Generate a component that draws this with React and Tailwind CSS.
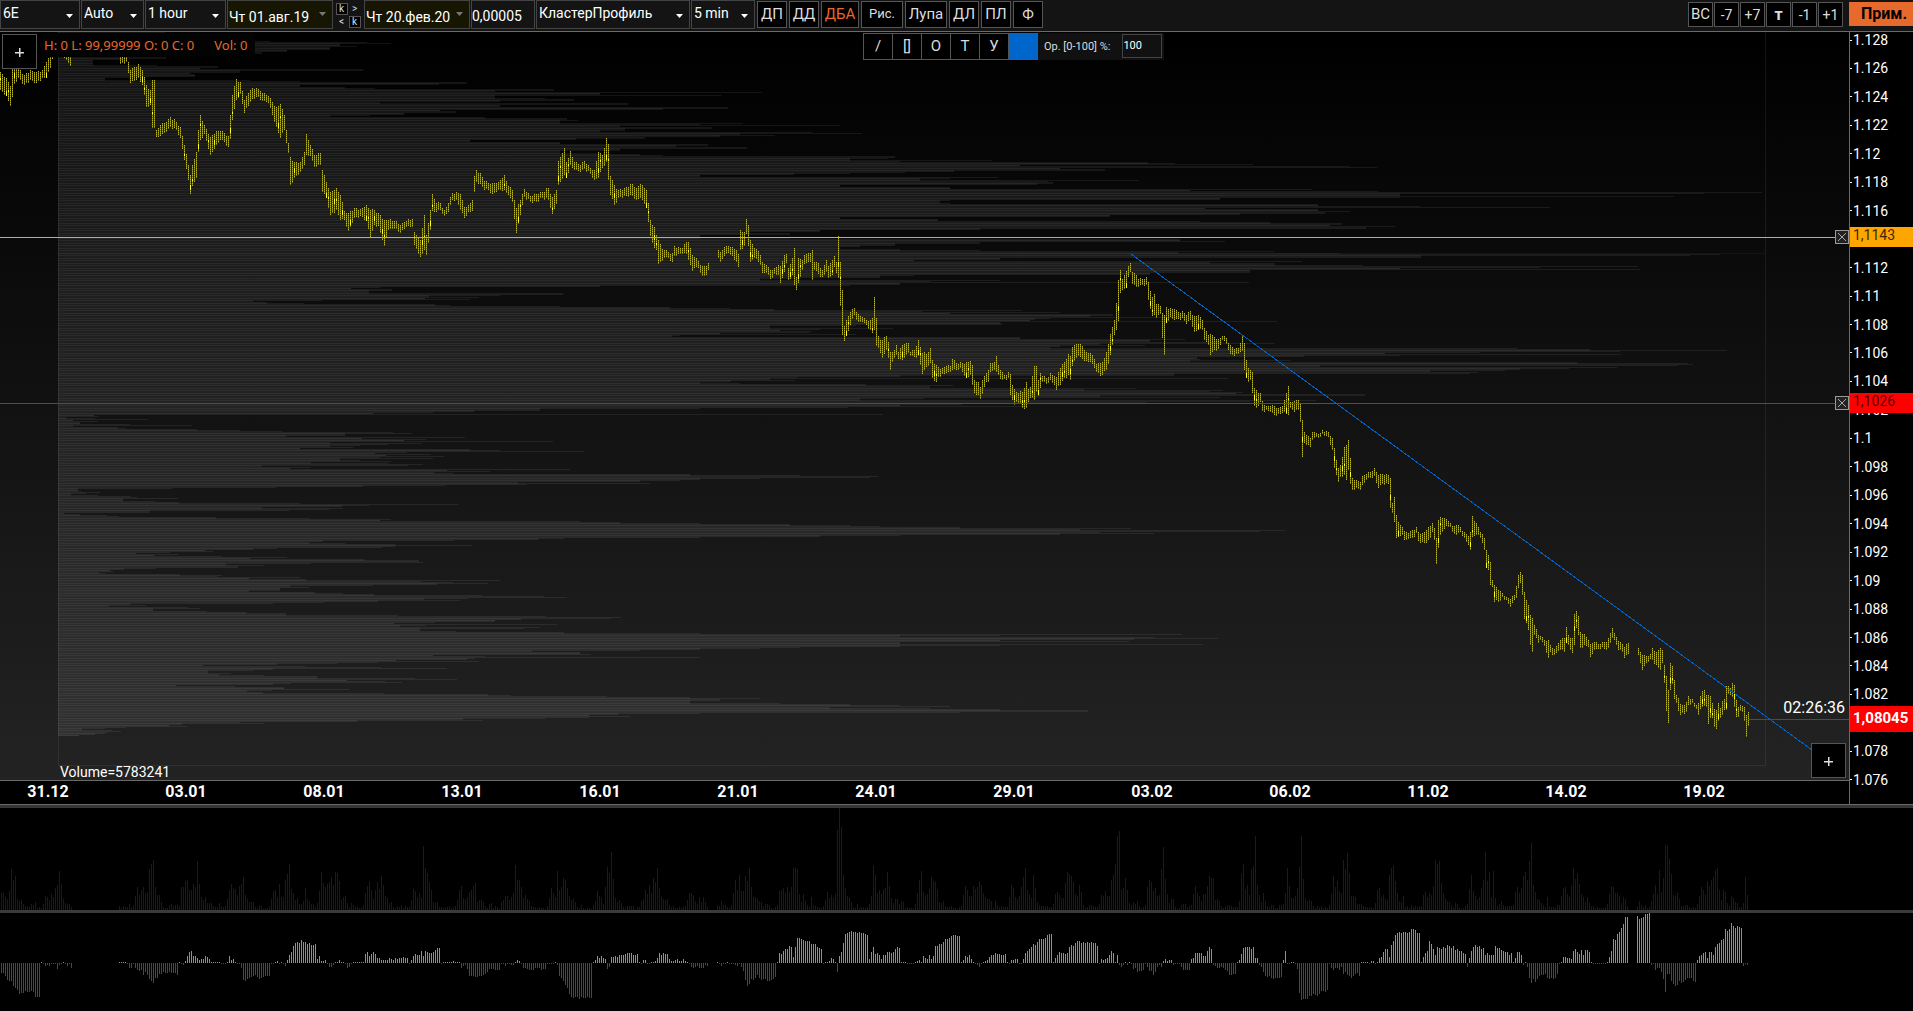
import { useState } from "react";

// one bar every 2px; each run is [first bar, values]
const VOLUME = [
  [0, "17 17 13 11 19 41 30 34 11 9 10 6 4 3 3 6 5 8 2 3 2 6 14 13 10 16 13 22 25 39 26 11 7 6 6 3"],
  [59, "4 2 4 3 3 6 3 5 14 23 15 20 23 17 18 41 46 50 23 15 15 8 3 2 2 5 6 4 5 5 4 23 23 29 30 20 20 26 23 49 26 13 10 13 7 7 7 4 3 3 7 4 3 4 11 20 26 22 21 15 24 26 33 15 11 8 8 8 3 2 5 4 1 2 2 4 11 19 20 13 26 13 13 30 36 46 21 17 10 12 6 6 9 22 11 9 6 5 3 7"],
  [159, "19 38 27 23 26 28 33 25 38 37 29 11 13 14 7 3 7 5 3 3 2 3 5 17 24 28 20 11 20 28 21 34 25 14 12 7 8 3 2 4 3 5 2 4 3 3 10 21 19 13 17 12 64 42 37 28 20 8 7 8 3 3 2 3 3 4 2 3 4 10 20 24 12 11 13 18 20 24 27 8 10 10 8 4 2 6 7 2 4 3 1 8 10 14 14 10 13 17 45 30 30 23 12 15 11 9 4 3 3 2 3 2 2 1 4 12 22 17 13"],
  [278, "39 20 23 32 30 22 14 10 12 8 3 2 5 2 1 2 2 1 5 9 19 14 12 6 23 43 37 58 31 12 8 10 7 3 2 4 4 4 4 1 3 3"],
  [320, "9 11 20 16 25 17 32 28 42 22 13 11 10 11 5 3 4 2 2 3 2 3 4 10 17 17 15 9 6 13 8 13 8 3"],
  [358, "5 4 9 5 5 3 2 5 17 30 20 35 19 19 34 29 42 23 13 13 11 9 8 4 6 6 5 2 1 3 5 19 20 22 17 23 18 23 42 42 41 16 8 16 9 5 3 13 5 4 3 3 2 4 10 18 12 15 12 16 80"],
  [419, "102 83 35 22 14 13 8 3 2 6 2 3 3 2 3 6 14 44 35 17 20 16 21 22 38 24 12 7 11 11 6 9 8 2 3 2 2 2 6 17 30 39 18 15 16 21 33 29 28 20 8 7 9 4 3 3 4 2 2 1 3 4 15 24 20 14 14 24 21 23 29 25 17 13 11 11 9 2 9 5 3 4 3 3 3"],
  [504, "13 25 22 13 11 14 23 33 42 20 16 12 35 22 8 5 4 4 3 4 3 3 6 16 18 15 12 12 27 38 36 34 28 16 14 25 18 5 2 3 5 5 4 3 3 6 15 14 19 14 14 30 35 46 74 79 21 22 32 20 7 5 8 6 9 4 2 3 5"],
  [573, "23 30 28 19 22 14 15 41 63 31 16 7 11 11 3 1 2 5 6 6 3 4 5 16 24 17 14 9 16 16 24 34 32 32 10 11 9 4 2 3 5 5 4 3 3 3 9"],
  [620, "36 46 21 25 15 41 44 74 25 15 8 17 9 4 3 5 5 2 2 5 5 6 17 42 24 12 12 14 22 43 74 31 12 9 10 9 4 2 4 3 4 2 3 2 5 16 34 23 29 19 17 50 41 57 37 14 14 13 6 6 6 4 3 3 3 3 2 7 20 22 13 15 11 10 35 42 44 29 17 9 8 14 3 4 2 5 3 4 3 3 4"],
  [711, "15 18 13 17 15 24 50 46 49 27 17 12 9 8 5 3 7 6 3 1 2 4 6 21 35 19 14 11 13 22 30 58 29 38 13 39 12 4 6 9 5 3 4 4 4 5 18 23 17 22 34 38 30 49 67 25 18 11 10 7 5 3 13 4 3 3 2 5 5 14 22 23 16 13 24 42 31 36 26 16 13 8 13 7 4 4 2 3 2 2 2 3 6 16 24 23 17 17 14 7 13 11 4"],
  [818, "3 9 5 3 5 2 3 9 16 25 16 40 18 32 65 64 51 36 15 14 17 11 4 4 5 5 3 2 3 2 6 14 23 20 16 29 24 30 33 40 42 20 10 20 18 7 4 14 12 8 7 3 3 7 33 15"],
];

const DELTA = [
  [0, "-10 -10 -13 -17 -18 -18 -23 -25 -27 -31 -30 -30 -28 -29 -29 -28 -29 -34 -34 -34 1 -1 -3 -2 -3 -1 -1 -1 -6 -2 -1 1 -1 -3 -1 -5"],
  [59, "1 1 1 1 -1 -5 -5 -1 -5 -7 -8 -7 -12 -9 -12 -16 -18 -20 -15 -15 -11 -11 -9 -10 -10 -9 -10 -10 -10 -12 1 -1 -2"],
  [92, "2 7 11 12 7 7 5 3 4 4 7 6 4 1 1 1 1 1 -1 -1 -1 1 7 3 4 1 -1 -1 -5 -17 -18 -16 -15 -14 -13 -12 -14 -16 -15 -14 -13 -13 -13 -1 -1 1 2 -1 1 -1 -3"],
  [143, "3 8 11 17 20 21 20 23 21 21 19 20 18 18 19 4 7 2 2 3 -1 -4 -4 -2 1 1 3 1 1 -1 -5 -4 -1 1 1 1 1 1 1"],
  [182, "9 11 7 9 11 9 5 5 3 3 3 3 5 4 3 5 4 5 5 6 5 5 -1 3 7 9 8 8 12 7 12 11 10 10 11 13 15 15 -1 1 1 1 1 1 2 1 1 1"],
  [230, "-5 -3 -2 -6 -13 -13 -13 -14 -14 -13 -13 -12 -11 -9 -6 -6 -6 -7 -7 -7 -1 -1 -3 -1 -1 -2 -2 1 3 2 -1 -5 -5 -6 -7 -7 -7 -5 -5 -5 -7 -6 -6 -1 -1 -1 -1 1"],
  [278, "-2 -13 -15 -18 -22 -25 -31 -34 -35 -34 -34 -36 -34 -35 -35 -34 -35 -35 1 3 7 5 7 5 4 -6 -4 6 6 7 6 8 8 8 9 10 10 10 8 8 9 1"],
  [320, "-1 3 3 -1 -1 1 1 2 5 10 8 10 9 9 4 2 2 3 4 2 2 4 2 1 -1 -4 -5 -4 -3 -5 -5 -5 -2 -3"],
  [358, "1 -1 -3 -1 -1 1 -1 -1 -1 -2 -3 -1 -4 -8 -17 -23 -21 -16 -17 -15 -12 -15 -17 -16 -16 -18 -18 -17 -16 -14 1 10 9 12 14 14 17 16 6 16 25 25 24 23 22 22 22 19 19 19 16 15 14 -1 1 1 2 5 4 1 -9"],
  [419, "7 11 20 29 30 31 32 31 31 30 31 30 30 29 28 4 11 16 9 10 8 4 8 8 11 11 10 11 14 16 15 1 1 1 -1 -1 -1 -1 1 2 3 1 7 5 4 8 4 7 17 17 19 19 21 24 24 25 27 28 28 27 27 1 3 7 6 8 4 1 -1 -2 -4 -1 1 2 3 6 8 8 10 9 9 8 8 9"],
  [503, "1 -1 3 3 4 4 -1 -1 4 10 12 14 16 19 18 21 24 24 24 25 28 29 29 1 5 8 11 10 10 9 10 16 18 17 20 22 22 20 21 20 21 20 21 20 20 17 -1 4 3 4 5 8 12 10 1 8 -2 -4 -2 1 -2 1 -1 -6 -5 -9 -8 -8 -7 -1 -4 -8 -8 -12 -9 -4 -2 -4 2 4 2 3 3 -2 -1 -1 -1 -4 -7 -7 -7 -7"],
  [595, "4 5 10 10 10 10 7 7 12 16 14 -2 -3 -5 -5 -4 -5 -7 -8 -12 -12 -11 -11 1 3"],
  [620, "9 15 16 16 16 14 16 5 5 -2 -4 -9 -13 -14 -13 -15 -16 -15 -15 -15 -14 3 12 -1 -1 1 1 -1 -6 -30 -37 -36 -36 -36 -33 -33 -31 -32 -33 -31 -28 -28 -29 -27 -1 -5 -7 -5 -5 -7 -4 -11 -9 -12 -13 -15 -13 -11 -10 -13 1 1 1 1 -1 2 2 -1 1 5 6 11 14 14 6"],
  [695, "18 22 28 30 31 30 31 31 30 31 34 34 33 30 30 1 6 10 12 22 19 14 8 16 15 14 16 15 18 17 15 17 13 14 12 12 10 9 -4 5 12 16 18 16 17 14 15 8 10 8 8 8 17 15 15 13 12 11 11 8 10 1 5 11 11 8 -2 1 -4"],
  [764, "-15 -20 -16 -19 -16 -13 -12 -12 -11 -15 -16 -15 -16 -15 -11 -1 1 6 6 5 5 4 12 14 11 9 13 8 13 13 11 1 -1 -1 -1 -1 -1 -1 -1 1 6 12 24 23 29 31 35 39 46 46"],
  [818, "47 44 45 46 49 49 50 -2 -1 -7 -5 -5 -9 -16 -29 -11 -11 -18 -21 -23 -22 -18 -20 -19 -17 -15 -15 -15 -18 -19 3 7 8 10 11 5 11 11 8 16 19 20 23 24 34 32 34 40 37 35 37 36 35 -3 -1 -2"],
];

// x:high,low, one session between two gaps per entry
const PRICE = [
  "0:72,90 6:78,96 10:86,106 12:68,97 14:66,84 18:68,78 24:75,85 30:70,80 36:72,83 42:70,78 46:62,78 50:56,68 54:33,48 60:33,50 66:50,60 70:56,66",
  "120:52,64 126:54,62 130:70,83 138:64,78 142:70,85 146:85,107 150:90,105 152:80,128 154:80,128 156:130,137 160:125,136 166:122,132 170:117,127 176:122,130 181:127,138 185:145,160 188:165,180 190:175,194 193:165,186 196:152,178 198:130,152 200:115,140 204:125,134 210:137,155 216:131,145 220:131,140 225:133,142 229:136,147 231:115,139 233:95,120 236:79,100 240:82,94 244:100,113 250:90,102 256:88,97 262:93,101 268:96,103 272:102,115 276:107,127 280:104,138 285:115,130 288:143,153 291:157,185 295:162,178 300:162,172 304:152,165 307:134,155 311:145,156 315:155,167 320:153,165 323:170,192 327:182,198 331:192,215 336:188,210 340:195,220 345:211,220 349:213,231 354:208,218 360:209,216 366:205,220 371:210,238 375:210,225 379:213,226 384:220,246 388:220,230 394:221,229 400:225,233 406:221,227 412:219,227 415:232,245 420:240,257 424:215,250 427:235,255 430:210,230 432:194,211 436:203,212 440:203,210 444:210,216 448:203,212 452:193,200 456:192,200 460:194,210 464:207,218 468:205,212 472:200,211 475:176,192 477:170,182 480:173,184 484:181,190 488:183,190 492:183,194 498:182,190 504:175,190 508:186,195 512:190,202 516:208,233 520:200,215 524:189,197 530:196,202 536:194,202 542:192,198 548:188,200 552:197,214 556:190,204 559:161,185 564:148,175 566:162,178 570:151,165 574:162,170 580:165,172 584:161,169 590:168,174 595:170,180 598:152,178 602:155,168 606:138,162 609:144,180 611:176,195 614:185,205 618:190,198 624:188,196 632:184,196 636:188,200 640:184,198 644:188,204 646:190,208 648:203,222 650:220,236 654:227,248 656:235,250 658:240,264 662:249,261 665:250,258 668:252,258 672:253,262 675:246,256 678:247,254 682:248,254 686:242,254 689:242,260 692:255,271 695:257,268 699:261,268 703:266,276 706:266,275 708:263,270",
  "718:250,258 721:252,262 725:247,256 728:246,253 731:247,255 736:250,262 738:254,267 740:230,250 744:232,246 746:219,234 748:225,246 750:240,262 754:248,258 758:251,262 761:255,265 763:262,273 766:265,273 770:270,279 774:268,274 778:265,275 781:266,283 784:255,272 786:254,263 789:268,280 792:258,275 794:248,285 796:277,290 798:258,283 802:260,270 805:255,264 808:253,262 810:253,262 812:250,280 815:262,270 818:263,274 822:270,277 826:260,272 829:266,278 832:260,275 834:256,267 836:262,273 838:236,278 840:262,306 842:290,335 844:326,341 847:320,336 850:312,325 854:308,315 858:314,322 862:317,322 866:320,325 870:320,330 872:318,333 874:297,330 876:318,346 878:336,348 880:340,353 882:340,358 884:337,354 887:336,350 889:342,358 891:352,370 893:352,362 895:350,358 897:345,355 899:352,359 902:345,360 905:344,358 908:343,353 911:352,356 915:350,357 919:340,356 922:353,374 924:352,370 927:354,367 931:348,363 933:360,378 936:365,382 939:367,377 942:368,374 946:366,373 950:366,372 952:359,370 956:363,370 960:362,368 964:364,376 966:362,378 970:361,375 972:365,385 975:380,393 978:382,395 980:387,399 983:380,394 986:373,382 988:370,382 991:363,372 994:362,370 996:356,372 999:365,375 1002:372,380 1005:375,379 1008:372,378 1010:374,395 1012:385,400 1014:389,405 1017:392,402 1020:391,404 1023:392,408 1026:382,408 1028:389,402 1031:387,398 1034:366,400 1036:366,392 1038:380,396 1040:373,388 1043:376,382 1047:378,384 1051:373,380 1054:376,385 1056:377,390 1058:372,386 1061:368,385 1064:362,378 1068:354,375 1070:356,380 1073:347,366 1076:344,358 1079:344,356 1082:346,359 1086:352,361 1090:353,362 1094:359,368 1097:364,372 1101:363,376 1104:358,371 1107:352,370 1111:334,355 1114:320,335 1116:303,330 1118:280,321 1120:270,293 1123:279,290 1126:271,288 1128:266,277 1130:263,272 1133:272,284 1136:275,287 1139:279,287 1143:279,285 1147:277,285 1149:282,300 1152:297,316 1154:294,315 1156:304,318 1160:306,314 1162:313,338 1164:315,355 1166:307,323 1170:308,317 1174:309,320 1178:312,319 1182:311,318 1186:315,324 1190:311,320 1194:316,332 1198:315,330 1202:320,330 1205:328,340 1208:335,345 1211:334,355 1214:337,350 1218:339,349 1222:336,340 1226:338,344 1230:345,354 1234:349,356 1238:348,354 1240:343,352 1242:335,351 1244:343,370 1246:360,378 1248:368,382 1251:370,380 1253:372,393 1255:388,406 1257:390,408 1260:393,402 1263:401,411 1267:406,410 1271:406,412 1274:406,415 1279:408,414 1283:406,413 1285:400,412 1288:386,415 1291:402,408 1295:401,412 1298:400,410 1300:404,422 1302:420,457 1304:432,443 1307:435,445 1310:438,447 1313:432,440 1316:433,437 1320:433,437 1323:430,434 1326:431,436 1329:432,437 1332:438,450 1334:448,468 1337:460,475 1339:468,482 1341:465,477 1344:447,475 1346:445,480 1348:440,470 1350:458,484 1353:478,490 1357:480,488 1360:482,490 1363:476,485 1367:474,480 1371:472,478 1375:468,476 1377:472,483 1379:475,488 1382:474,484 1386:474,483 1389:475,484 1391:478,508 1393:503,513 1395:497,522 1397:515,538 1399:522,537 1402:527,535 1405:531,540 1409:533,539 1412:530,538 1416:527,533 1419:532,541 1422:533,542 1426:530,543 1430:526,538 1433:523,532 1435:528,540 1436:538,564 1438:520,548 1440:517,535 1444:518,529 1447:519,526 1450:523,527 1453:526,532 1457:525,535 1461:527,532 1465:532,538 1468:536,545 1470:532,550 1472:516,537 1475:521,536 1478:527,535 1481:532,538 1484:538,550 1486:550,568 1488:555,570 1490:562,585 1492:580,587 1494:585,602 1497:587,600 1500:591,601 1503:593,597 1507:597,600 1510:599,607 1514:595,600 1516:586,598 1518:575,588 1520:572,583 1522:575,595 1524:592,619 1527:600,623 1529:605,630 1531:615,645 1532:618,652 1535:625,635 1538:635,643 1541:636,640 1545:640,646 1548:640,658 1551:645,652 1555:649,655 1559:643,651 1562:638,650 1564:638,652 1567:627,643 1569:635,645 1572:638,653 1574:614,645 1576:611,628 1578:616,635 1581:632,648 1584:634,645 1588:640,647 1591:644,657 1594:642,650 1598:644,649 1602:642,647 1606:642,650 1609:638,648 1612:628,638 1615:633,640 1618:641,650 1622:644,652 1625:647,658 1628:643,654",
  "1638:648,655 1642:655,670 1646:656,663 1650:654,659 1653:648,660 1657:652,665 1660:648,670 1662:650,663 1664:665,683 1666:676,711 1668:690,723 1670:663,690 1672:666,684 1674:680,699 1677:695,703 1679:698,711 1681:704,715 1683:705,713 1686:702,712 1689:696,705 1692:699,703 1695:703,707 1697:705,709 1699:703,715 1701:696,709 1703:691,707 1705:690,706 1707:695,707 1708:695,724 1710:696,718 1712:703,718 1714:709,727 1716:710,729 1718:703,721 1720:708,718 1723:701,715 1725:699,710 1726:686,710 1729:686,694 1731:688,695 1732:683,697 1734:685,707 1736:700,717 1739:707,717 1741:705,711 1743:706,712 1744:707,721 1746:715,737 1748:712,726",
];

// y:right edge of the profile row
const PROFILE =
  "31:165 33:107 35:60 41:270 42:367 43:391 44:340 46:357 47:330 50:287 52:262 54:255 56:166 59:122 60:93 61:93 65:157 66:218 68:200 69:363 71:240 73:190 74:195 77:130 78:105 80:250 81:300 82:467 84:439 85:300 87:345 88:375 89:554 91:495 92:762 93:600 95:721 96:495 98:545 99:574 101:500 102:380 103:628 105:500 107:728 109:663 110:440 111:456 113:404 115:370 116:330 117:485 118:567 120:578 121:560 123:743 124:700 125:840 126:620 127:712 129:625 131:600 132:812 133:862 134:740 135:775 136:720 137:645 139:576 140:470 142:560 144:708 146:676 147:747 149:620 151:560 153:600 154:640 155:663 156:895 158:888 159:850 160:992 161:900 162:1148 163:1175 164:1253 165:1020 166:1350 167:1377 168:1060 169:1105 171:954 172:905 173:850 174:794 175:700 177:998 178:950 179:920 180:1139 181:1048 182:1053 184:1037 185:840 187:950 189:1312 190:1190 191:1378 192:1762 193:1704 194:1400 196:1674 197:1400 198:1220 200:950 201:940 203:950 204:1318 206:1420 207:1550 208:1205 209:1318 211:1350 212:1325 214:1240 215:1110 217:840 219:938 221:1200 222:1270 223:1342 225:1330 226:1395 227:1366 229:980 230:820 232:750 233:790 235:700 238:790 239:1180 241:1225 242:980 244:895 246:860 247:840 249:900 250:980 251:1274 252:1178 253:1340 254:1720 255:1690 256:1421 258:1000 260:914 261:1302 262:1210 263:1275 265:1363 266:1638 267:1540 268:1400 269:1640 270:1250 273:1150 275:914 276:880 278:800 279:760 280:1000 281:930 282:1249 283:900 285:850 286:600 287:380 288:351 289:392 291:369 293:563 295:500 296:429 297:479 298:425 299:470 300:322 301:253 302:267 303:304 304:435 305:450 306:560 307:670 308:730 309:774 310:1022 311:922 312:1060 313:950 314:1113 316:1090 317:1185 318:1050 319:1035 320:1030 321:1277 322:1000 323:1002 325:856 326:770 328:893 329:820 330:780 331:812 332:809 333:720 334:856 335:680 336:672 337:1020 339:1185 340:1150 342:1222 343:1275 344:1100 345:1145 346:1060 347:1050 348:1517 349:1590 350:1727 351:1620 352:1480 353:1385 354:1621 355:1400 356:1304 357:1197 359:1200 360:1291 361:1190 362:1577 363:1688 364:1693 365:1678 366:1320 367:1617 368:1569 369:1520 370:1505 371:1430 372:1478 373:1470 374:1174 376:900 377:797 378:1228 379:770 380:795 381:731 382:700 383:740 384:866 385:953 386:930 388:1136 389:1084 390:1223 391:1210 392:1243 393:1236 394:1365 396:1100 397:1220 398:924 399:860 400:1316 401:1250 402:1147 403:1000 404:962 405:900 406:1026 407:848 408:700 409:540 411:474 412:433 413:373 414:883 415:94 416:99 417:66 418:95 419:148 420:73 421:98 422:80 424:130 425:192 426:73 427:118 428:126 429:197 430:240 431:282 432:393 433:412 434:345 436:286 437:465 438:362 439:426 440:404 441:553 442:330 443:422 444:388 445:360 446:330 447:353 448:300 449:470 450:500 451:584 452:407 453:375 454:431 455:386 456:444 457:380 458:433 459:340 460:360 461:391 462:311 463:388 464:423 465:408 466:262 467:311 468:290 469:570 470:447 471:490 472:434 473:453 474:690 475:800 476:878 477:870 478:760 479:700 480:680 481:640 482:518 483:650 484:527 485:445 486:363 487:276 488:172 489:78 491:82 492:100 493:86 494:71 495:98 496:131 497:137 498:178 499:123 501:155 502:179 503:300 504:458 505:369 506:342 507:262 508:343 509:329 510:289 511:150 513:64 514:80 515:107 516:119 517:216 518:310 519:391 520:380 521:580 522:620 523:700 524:790 525:850 526:880 527:960 528:1131 529:1080 530:1285 531:1260 532:1100 533:1154 534:1060 535:900 536:820 537:700 538:564 539:538 540:454 541:323 542:309 543:345 544:396 545:472 546:395 547:382 548:277 549:253 550:205 551:213 552:170 553:136 554:178 555:154 556:222 557:287 558:250 559:364 560:419 562:423 563:311 564:226 565:264 566:238 568:156 569:124 570:110 571:113 572:99 573:106 574:180 575:222 576:217 577:300 578:249 579:306 580:500 581:421 582:453 583:488 584:437 585:373 586:290 587:309 588:280 591:249 592:315 593:343 594:374 595:482 596:544 597:567 598:468 599:424 600:460 601:378 602:324 603:273 604:130 605:146 606:109 607:188 608:200 609:153 611:207 612:246 613:286 615:398 616:546 617:621 618:611 619:521 620:495 622:435 623:394 624:557 625:426 626:400 627:540 628:524 629:420 631:456 632:564 633:700 634:1182 635:1000 636:900 637:1155 638:1218 639:1134 640:1000 641:1129 642:900 644:1203 645:1000 646:900 647:800 648:760 649:700 650:640 651:532 652:580 654:591 655:433 656:485 657:700 658:475 659:467 660:396 661:479 662:378 663:337 664:277 665:203 666:305 667:381 668:447 669:273 670:254 671:208 673:231 674:219 675:264 676:317 678:415 679:457 680:347 681:385 682:402 683:291 684:273 685:176 686:235 687:284 689:349 690:272 691:247 692:263 693:384 694:488 695:511 696:607 697:690 698:760 699:720 701:690 703:780 704:850 705:900 706:950 707:830 708:930 709:1000 710:1088 712:960 713:700 714:618 715:589 716:630 717:589 718:545 719:463 720:483 721:357 722:240 723:264 724:182 725:169 726:187 727:126 728:105 729:82 730:112 731:121 732:108 733:105 734:95 735:79";

const DATES = ["31.12", "03.01", "08.01", "13.01", "16.01", "21.01", "24.01", "29.01", "03.02", "06.02", "11.02", "14.02", "19.02"];
const PRICES = Array.from({ length: 27 }, (_, i) => String(Number((1.128 - i * 0.002).toFixed(3))));
// prices that sit fully behind a level tag
const COVERED = ["1.114", "1.08"];
const TOP = 32;

function barPath(runs, base, sign) {
  let d = "";
  runs.forEach(([start, values]) => {
    values.split(" ").forEach((v, i) => {
      const h = Number(v) * sign;
      if (h > 0) d += `M${(start + i) * 2 + 1} ${base}h1v${-Number(v)}h-1z`;
    });
  });
  return d;
}

function profilePaths() {
  const rows = {};
  PROFILE.split(" ").forEach((pair) => {
    const [y, x] = pair.split(":").map(Number);
    rows[y] = x;
  });
  let body = "";
  let lines = "";
  for (let y = 32; y <= 735; y++) {
    if (rows[y] === undefined) rows[y] = rows[y - 1];
    body += `M58 ${y - TOP}H${rows[y]}v1H58z`;
    if (Math.floor(y / 2.5) !== Math.floor((y - 1) / 2.5)) {
      const end = Math.min(rows[y], rows[y + 1] || rows[y], rows[y - 1]);
      lines += `M58 ${y - TOP}H${end}v1H58z`;
    }
  }
  return { body, lines };
}

function pricePaths() {
  let bars = "";
  let hot = "";
  PRICE.forEach((session) => {
    const pts = session.split(" ").map((p) => {
      const [x, hl] = p.split(":");
      const [hi, lo] = hl.split(",").map(Number);
      return [Math.floor(Number(x) / 2), hi, lo];
    });
    for (let k = 0; k < pts.length; k++) {
      const [a, hi, lo] = pts[k];
      const [b, hi2, lo2] = pts[k + 1] || [a + 1, hi, lo];
      for (let i = a; i < b; i++) {
        const t = (i - a) / (b - a);
        const wobble = i === a ? 0 : ((i * 7) % 3) - 1;
        const top = Math.round(hi + (hi2 - hi) * t) + wobble;
        const bottom = Math.round(lo + (lo2 - lo) * t) + wobble;
        bars += `M${i * 2 + 0.5} ${top - TOP}V${bottom - TOP}`;
        if (bottom - top > 14 && (i * 11) % 4 < 2) {
          const mid = Math.round(top + (bottom - top) * (0.35 + ((i * 13) % 10) / 25));
          hot += `M${i * 2 + 0.5} ${mid - TOP}v${2 + ((i * 5) % 4)}`;
        }
      }
    }
  });
  return { bars, hot };
}

const profile = profilePaths();
const price = pricePaths();
const volumePath = barPath(VOLUME, 102, 1);
const deltaUp = barPath(DELTA, 50, 1);
const deltaDown = barPath(DELTA, 50, -1);

function Picker({ label, text, className, low }) {
  return (
    <div className={`relative h-[29px] shrink-0 border border-[#444] ${low ? "bg-[#161603]" : "bg-[#141414]"} ${className}`}>
      <select
        aria-label={label}
        className={`block h-full w-full appearance-none bg-transparent text-white outline-none ${low ? "pl-px pt-1" : "pb-1 pl-0.5"}`}
      >
        <option>{text}</option>
      </select>
      <svg
        viewBox="0 0 7 4"
        className={`pointer-events-none absolute right-[6px] h-1 w-[7px] ${low ? "top-[11px] fill-[#777]" : "top-[13px] fill-white"}`}
      >
        <path d="M0 0h7L3.5 4z" />
      </svg>
    </div>
  );
}

function ToolButton({ children, className }) {
  return (
    <button className={`h-[27px] shrink-0 border border-[#555] bg-black ${className}`}>{children}</button>
  );
}

function StepButton({ children }) {
  return (
    <button className="h-[25px] w-[25px] border border-[#555] bg-black text-sm text-[#ddd]">{children}</button>
  );
}

function PlusButton({ label, className }) {
  return (
    <button
      aria-label={label}
      className={`absolute flex h-[35px] w-[35px] items-center justify-center border border-[#555] bg-black ${className}`}
    >
      <svg viewBox="0 0 9 9" className="mt-0.5 h-[9px] w-[9px] fill-[#ddd]">
        <path d="M4 0h1.5v4H9v1.5H5.500V9H4V5.500H0V4h4z" />
      </svg>
    </button>
  );
}

function CloseLine({ label, className }) {
  return (
    <button aria-label={label} className={`absolute right-0 h-3.5 w-3.5 border border-[#999] bg-[#222] ${className}`}>
      <svg viewBox="0 0 12 12" className="h-3 w-3 stroke-[#aaa]">
        <path d="M2 2l8 8M10 2l-8 8" />
      </svg>
    </button>
  );
}

function Toolbar() {
  let [step, setStep] = useState("0,00005");

  return (
    <header className="flex h-8 shrink-0 items-start border-b border-[#6a6a6a] bg-[#141414]">
      <div className="flex gap-px">
        <Picker label="Symbol" text="6E" className="w-20" />
        <Picker label="Scale" text="Auto" className="w-[63px]" />
        <Picker label="Timeframe" text="1 hour" className="w-[81px]" />
        <Picker label="From" text="Чт 01.авг.19" className="w-[106px]" low />
        <div className="grid w-[29px] shrink-0 grid-cols-[13px_13px] grid-rows-[13px_13px] place-items-center pt-0.5 pl-px text-[10px] leading-none text-[#ddd]">
          <button className="h-3 w-3 border border-[#555] bg-black">k</button>
          <button>&gt;</button>
          <button>&lt;</button>
          <button className="h-3 w-3 border border-[#555] bg-black">k</button>
        </div>
        <Picker label="To" text="Чт 20.фев.20" className="w-[106px]" low />
        <input
          aria-label="Step"
          value={step}
          onChange={(e) => setStep(e.target.value)}
          className="h-[29px] w-16 border border-[#444] bg-[#141414] pt-0.5 text-white outline-none"
        />
        <Picker label="Chart type" text="КластерПрофиль" className="w-[154px]" />
        <Picker label="Period" text="5 min" className="w-16" />
      </div>
      <div className="ml-0.5 mt-px flex gap-0.5 text-[15px] text-[#ddd]">
        <ToolButton className="w-[30px]">ДП</ToolButton>
        <ToolButton className="w-[30px]">ДД</ToolButton>
        <ToolButton className="w-[38px] text-[#e8692c]">ДБА</ToolButton>
        <ToolButton className="w-[42px] text-[13px]">Рис.</ToolButton>
        <ToolButton className="w-[42px]">Лупа</ToolButton>
        <ToolButton className="w-[30px]">ДЛ</ToolButton>
        <ToolButton className="w-[30px]">ПЛ</ToolButton>
        <ToolButton className="w-[30px]">Ф</ToolButton>
      </div>
      <div className="ml-auto mt-0.5 flex gap-px">
        <button className="h-[25px] w-[25px] border border-[#555] bg-black text-[15px] text-[#ddd]">ВС</button>
        <StepButton>-7</StepButton>
        <StepButton>+7</StepButton>
        <StepButton>
          <b className="text-base leading-5">т</b>
        </StepButton>
        <StepButton>-1</StepButton>
        <StepButton>+1</StepButton>
        <button className="ml-[5px] h-6 w-16 bg-[#e8692c] pl-1.5 text-base font-bold leading-6 text-black">Прим.</button>
      </div>
    </header>
  );
}

function DrawTools() {
  let [opacity, setOpacity] = useState("100");
  let tools = ["/", "[]", "О", "Т", "У"];

  return (
    <div className="absolute left-[863px] top-px flex h-[27px] bg-[#111] text-[15px] text-[#ddd]">
      {tools.map((tool) => (
        <button key={tool} className="w-[29px] border border-r-0 border-[#555] bg-black">
          {tool}
        </button>
      ))}
      <button aria-label="Color" className="w-[30px] border border-[#555] bg-[#0066cc]" />
      <label htmlFor="opacity" className="ml-1.5 pt-1.5 text-[11px] leading-4">
        Ор. [0-100] %:
      </label>
      <input
        id="opacity"
        value={opacity}
        onChange={(e) => setOpacity(e.target.value)}
        className="ml-3 mr-0.5 mt-px h-6 w-10 border border-[#444] bg-[#111] pb-0.5 text-[11px] text-white outline-none"
      />
    </div>
  );
}

function Chart() {
  return (
    <div className="relative min-h-0 flex-1 bg-linear-to-b/srgb from-black to-[#232323]">
      <svg
        viewBox="0 0 1849 748"
        preserveAspectRatio="none"
        shapeRendering="crispEdges"
        className="absolute inset-0 h-full w-full fill-none"
      >
        <path d="M58.500 0V733.500H1765.500V0" stroke="#fff" strokeOpacity="0.07" />
        <path d={profile.body} fill="#fff" fillOpacity="0.075" />
        <path d={profile.lines} fill="#fff" fillOpacity="0.055" />
        <path d="M58 221.500H1765" stroke="#ff0000" strokeOpacity="0.16" />
        <path d={price.bars} stroke="#74740c" />
        <path d={price.bars} stroke="#bab428" strokeDasharray="1 1" />
        <path d={price.hot} stroke="#ffff20" />
        <path d="M0 205.500H1849" stroke="#ffa500" />
        <path d="M0 371.500H1849" stroke="#f00a0a" />
        <path d="M1748 687.500H1849" stroke="#ff0000" />
        <path d="M1131 222L1812 718" stroke="#0062c4" />
      </svg>
      <PlusButton label="Add panel" className="left-0.5 top-0.5" />
      <p className="absolute left-[41px] top-px flex h-6 w-[214px] items-center gap-5 bg-[#030303] pl-[3px] font-['Noto_Sans'] text-[13px] text-[#e8692c]">
        <span>H: 0 L: 99,99999 O: 0 C: 0</span>
        <span>Vol: 0</span>
      </p>
      <DrawTools />
      <CloseLine label="Remove 1,1143" className="top-[198px]" />
      <CloseLine label="Remove 1,1026" className="top-[364px]" />
      <p className="absolute bottom-[62px] right-1 text-base leading-5 text-white">02:26:36</p>
      <p className="absolute bottom-0 left-[60px] text-sm leading-4 text-white">Volume=5783241</p>
      <PlusButton label="Add order" className="bottom-0.5 right-[3px]" />
    </div>
  );
}

function PriceAxis() {
  return (
    <aside className="relative flex w-16 shrink-0 flex-col justify-between border-l border-[#6a6a6a] pb-4">
      {PRICES.map((p) => (
        <div key={p} className="flex h-4 items-center gap-px text-sm leading-4 text-white">
          <i className="h-px w-0.5 bg-white" />
          {COVERED.includes(p) ? "" : p}
        </div>
      ))}
      <div className="absolute inset-x-0 top-[195px] h-5 bg-[#ffa500] pl-[3px] text-sm leading-4 text-[#3c2800]">1,1143</div>
      <div className="absolute inset-x-0 top-[361px] h-5 bg-[#ff0000] pl-[3px] text-sm leading-4 text-[#500000]">1,1026</div>
      <div className="absolute inset-x-0 top-[674px] h-[26px] bg-[#ff0000] pl-[3px] text-[15px] font-bold leading-6 text-white">
        1,08045
      </div>
    </aside>
  );
}

function App() {
  return (
    <div className="flex h-screen flex-col overflow-hidden bg-black font-['Roboto','Noto_Sans',sans-serif] text-sm">
      <Toolbar />
      <main className="flex min-h-0 flex-1">
        <section className="flex min-w-0 flex-1 flex-col">
          <Chart />
          <div className="flex h-6 shrink-0 items-center justify-between border-t border-[#6a6a6a] pb-0.5 pr-[97px] text-base font-bold text-white">
            {DATES.map((d) => (
              <span key={d} className="w-24 text-center">
                {d}
              </span>
            ))}
          </div>
        </section>
        <PriceAxis />
      </main>
      <div className="h-1 shrink-0 border-t border-[#6a6a6a] bg-[#35353a]" />
      <svg
        viewBox="0 0 1913 102"
        preserveAspectRatio="none"
        shapeRendering="crispEdges"
        className="block h-[102px] w-full shrink-0"
      >
        <path d={volumePath} fill="#0000ee" />
      </svg>
      <div className="h-[3px] shrink-0 bg-[#3a3a3f]" />
      <svg
        viewBox="0 0 1913 98"
        preserveAspectRatio="none"
        shapeRendering="crispEdges"
        className="block h-[98px] w-full shrink-0"
      >
        <path d={deltaUp} fill="#6495ed" />
        <path d={deltaDown} fill="#f00000" />
      </svg>
    </div>
  );
}

export default App;
